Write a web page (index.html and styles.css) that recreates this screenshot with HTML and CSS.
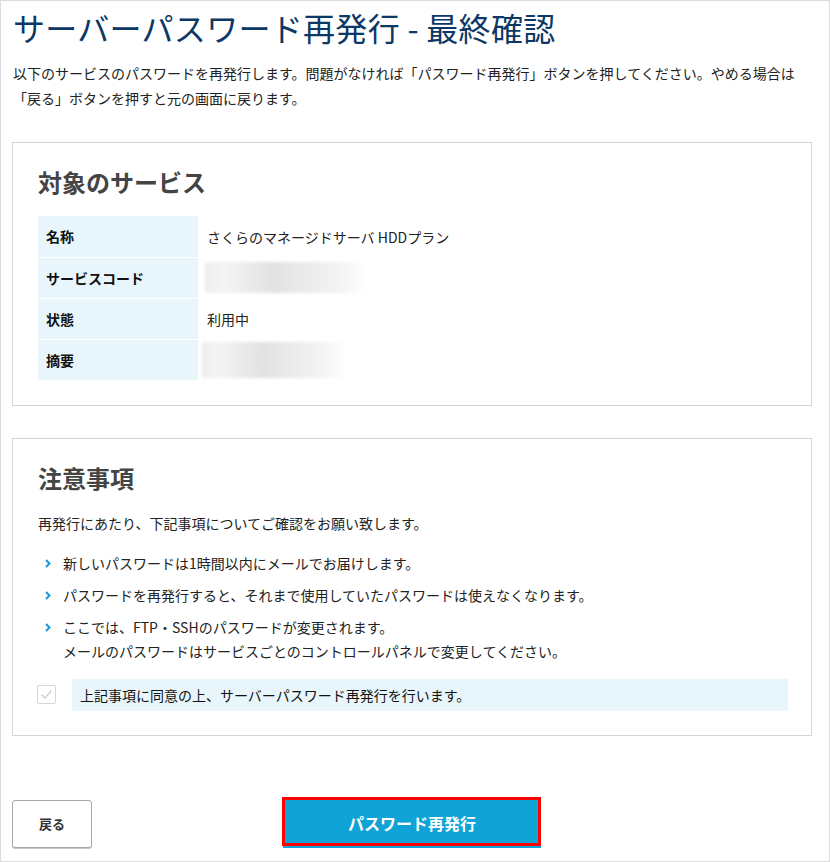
FILE: index.html
```html
<!DOCTYPE html>
<html lang="ja">
<head>
<meta charset="utf-8">
<title>サーバーパスワード再発行 - 最終確認</title>
<link rel="stylesheet" href="styles.css">
</head>
<body>
<div class="frame">
  <h1 class="title">サーバーパスワード再発行 - 最終確認</h1>
  <p class="lead">以下のサービスのパスワードを再発行します。問題がなければ「パスワード再発行」ボタンを押してください。やめる場合は「戻る」ボタンを押すと元の画面に戻ります。</p>

  <section class="card">
    <h2 class="card-title">対象のサービス</h2>
    <table class="info">
      <tr><th>名称</th><td>さくらのマネージドサーバ HDDプラン</td></tr>
      <tr><th>サービスコード</th><td><div class="blur blur-code"></div></td></tr>
      <tr><th>状態</th><td>利用中</td></tr>
      <tr><th>摘要</th><td><div class="blur blur-note"></div></td></tr>
    </table>
  </section>

  <section class="card card-notes">
    <h2 class="card-title">注意事項</h2>
    <p class="intro">再発行にあたり、下記事項についてご確認をお願い致します。</p>
    <ul class="notes">
      <li><svg class="chev" width="6" height="9" viewBox="0 0 6 9"><polyline points="1,1 4.5,4.5 1,8" fill="none" stroke="#1a9ad6" stroke-width="2"/></svg><span>新しいパスワードは1時間以内にメールでお届けします。</span></li>
      <li><svg class="chev" width="6" height="9" viewBox="0 0 6 9"><polyline points="1,1 4.5,4.5 1,8" fill="none" stroke="#1a9ad6" stroke-width="2"/></svg><span>パスワードを再発行すると、それまで使用していたパスワードは使えなくなります。</span></li>
      <li><svg class="chev" width="6" height="9" viewBox="0 0 6 9"><polyline points="1,1 4.5,4.5 1,8" fill="none" stroke="#1a9ad6" stroke-width="2"/></svg><span>ここでは、FTP・SSHのパスワードが変更されます。<br>メールのパスワードはサービスごとのコントロールパネルで変更してください。</span></li>
    </ul>
    <div class="agree">
      <span class="check"><svg width="17" height="17" viewBox="0 0 17 17"><polyline points="3.5,8.5 7,12 13.5,4.5" fill="none" stroke="#d2d2d2" stroke-width="1.6"/></svg></span>
      <span class="agree-label">上記事項に同意の上、サーバーパスワード再発行を行います。</span>
    </div>
  </section>

  <div class="actions">
    <button class="btn-back" type="button">戻る</button>
    <div class="primary-wrap">
      <button class="btn-primary" type="button">パスワード再発行</button>
      <span class="highlight"></span>
    </div>
  </div>
</div>
</body>
</html>
```
FILE: styles.css
```css
* { box-sizing: border-box; }
html, body { margin: 0; padding: 0; background: #fff; }
body {
  font-family: "Noto Sans CJK JP", "Noto Sans", sans-serif;
  color: #222;
  font-size: 14px;
}
.frame {
  width: 830px;
  height: 862px;
  border: 1px solid #dcdcdc;
  padding: 0 17px 0 11px;
  overflow: hidden;
}
.title {
  margin: 5px 0 0 1px;
  font-size: 32px;
  line-height: 42px;
  font-weight: 400;
  color: #0c3865;
  letter-spacing: 0.3px;
}
.lead {
  margin: 13px 0 0 1px;
  font-size: 14px;
  line-height: 25px;
  width: 798px;
}
.card {
  margin-top: 31px;
  border: 1px solid #d4d4d4;
  padding: 22px 23px 24px 25px;
}
.card-notes { margin-top: 32px; }
.card-title {
  margin: 0 0 17px;
  font-size: 24px;
  line-height: 34px;
  font-weight: 700;
  color: #444;
}
.info {
  border-collapse: collapse;
  width: 100%;
}
.info th {
  width: 160px;
  height: 41px;
  background: #e8f6fc;
  border-bottom: 1px solid #fff;
  text-align: left;
  font-weight: 700;
  font-size: 14px;
  padding: 0 8px;
  color: #111;
}
.info td {
  padding: 0 0 0 9px;
  font-size: 14px;
  height: 41px;
  color: #222;
}
.blur {
  filter: blur(1.5px);
  background: linear-gradient(90deg, #eeeeee 0%, #f4f4f4 12%, #e2e2e2 42%, #ececec 65%, #f4f4f4 85%, #ffffff 100%);
}
.blur-code { width: 161px; height: 31px; margin-left: -2px; }
.blur-note { width: 144px; height: 36px; margin-left: -5px; margin-top: 1px; }

.card-notes .card-title { margin-bottom: 16px; }
.intro {
  margin: 0 0 16px;
  line-height: 24px;
}
.notes {
  list-style: none;
  margin: 0 0 16px;
  padding: 0;
}
.notes li {
  display: flex;
  align-items: flex-start;
  line-height: 24px;
  margin-top: 8px;
}
.notes li:first-child { margin-top: 0; }
.chev {
  flex: none;
  margin: 8px 12px 0 7px;
}
.agree {
  display: flex;
  align-items: center;
  height: 32px;
}
.check {
  flex: none;
  width: 19px;
  height: 19px;
  border: 1px solid #d6d6d6;
  border-radius: 2px;
  margin-left: -1px;
  display: flex;
  align-items: center;
  justify-content: center;
  background: #fff;
}
.agree-label {
  flex: 1;
  margin-left: 16px;
  height: 32px;
  background: #e8f6fc;
  padding: 0 8px;
  line-height: 32px;
  color: #111;
}
.actions {
  display: grid;
  grid-template-columns: 1fr auto 1fr;
  align-items: end;
  margin-top: 62px;
  width: 800px;
}
.btn-back {
  justify-self: start;
  grid-column: 1;
  width: 80px;
  height: 48px;
  background: #fff;
  border: 1px solid #a9a9a9;
  border-radius: 3px;
  box-shadow: 0 1px 0 #c8c8c8;
  font-family: inherit;
  font-size: 13px;
  font-weight: 700;
  color: #333;
  padding: 0;
}
.primary-wrap {
  grid-column: 2;
  position: relative;
  width: 258px;
  height: 50px;
}
.btn-primary {
  width: 258px;
  height: 50px;
  background: #0fa3d6;
  border: 0;
  color: #fff;
  font-family: inherit;
  font-size: 16px;
  font-weight: 700;
  padding: 0;
}
.highlight {
  position: absolute;
  left: -1px;
  top: -1px;
  width: 259px;
  height: 49px;
  border: 3px solid #ff0000;
  pointer-events: none;
}
```
